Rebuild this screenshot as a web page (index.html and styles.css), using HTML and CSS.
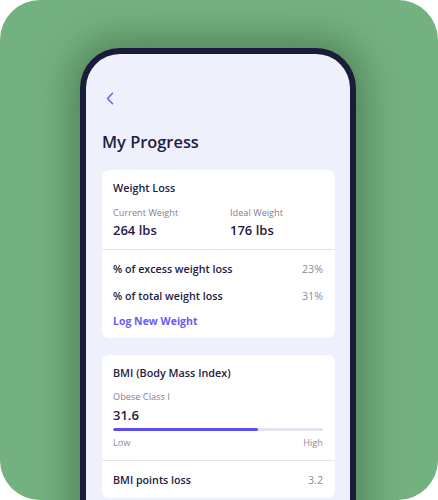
FILE: index.html
```html
<!DOCTYPE html>
<html>
<head>
<meta charset="utf-8">
<link rel="stylesheet" href="styles.css">
</head>
<body>
<div class="bg">
  <div class="phone">
    <div class="screen">
      <div class="back">
        <svg width="8" height="13" viewBox="0 0 8 13"><path d="M6.5 1.2 L1.5 6.5 L6.5 11.8" fill="none" stroke="#6a5cf2" stroke-width="1.4" stroke-linecap="round" stroke-linejoin="round"/></svg>
      </div>
      <h1 class="title">My Progress</h1>

      <div class="card">
        <div class="sec top">
          <div class="card-title">Weight Loss</div>
          <div class="stats">
            <div class="stat">
              <div class="label">Current Weight</div>
              <div class="value">264 lbs</div>
            </div>
            <div class="stat">
              <div class="label">Ideal Weight</div>
              <div class="value">176 lbs</div>
            </div>
          </div>
        </div>
        <div class="sec rows">
          <div class="row"><span class="row-name">% of excess weight loss</span><span class="row-val">23%</span></div>
          <div class="row second"><span class="row-name">% of total weight loss</span><span class="row-val">31%</span></div>
          <div class="link">Log New Weight</div>
        </div>
      </div>

      <div class="card card2">
        <div class="sec top bmi">
          <div class="card-title">BMI (Body Mass Index)</div>
          <div class="label cls">Obese Class I</div>
          <div class="value">31.6</div>
          <div class="bar"><div class="fill" style="width:69%"></div></div>
          <div class="range"><span>Low</span><span>High</span></div>
        </div>
        <div class="sec rows">
          <div class="row"><span class="row-name">BMI points loss</span><span class="row-val">3.2</span></div>
        </div>
      </div>
    </div>
  </div>
</div>
</body>
</html>
```
FILE: styles.css
```css
* { box-sizing: border-box; margin: 0; padding: 0; }
html, body { width: 438px; height: 500px; overflow: hidden; background: #ffffff; }
body { font-family: "Open Sans", "Noto Sans", sans-serif; color: #1f2042; }

.bg {
  width: 438px;
  height: 500px;
  background: #74b180;
  border-radius: 40px;
  overflow: hidden;
  padding-top: 48px;
}

.phone {
  margin-left: 80px;
  width: 276px;
  height: 520px;
  background: #1b1b3b;
  border-radius: 40px 40px 0 0;
  padding: 6px 6px 0 6px;
  box-shadow: 0 0 36px 10px rgba(40, 80, 45, 0.45);
}

.screen {
  background: #eef1fb;
  height: 100%;
  border-radius: 34px 34px 0 0;
  padding: 36px 15px 0 16px;
}

.back { height: 16px; display: flex; align-items: center; padding-left: 4px; }

.title {
  margin-top: 24px;
  font-size: 16.4px;
  line-height: 24px;
  font-weight: 600;
  color: #1f2042;
}

.card {
  margin-top: 16px;
  background: #ffffff;
  border-radius: 7px;
}
.card2 { margin-top: 17px; }

.sec { padding: 0 12px 0 11px; }
.top { padding-top: 10px; padding-bottom: 10px; border-bottom: 1px solid #e3e4ea; }

.card-title { font-size: 10.8px; line-height: 16px; font-weight: 600; color: #1f2042; }

.stats { display: flex; margin-top: 11px; }
.stat { flex: 0 0 117px; }

.label { font-size: 9.2px; line-height: 12px; color: #7f8196; }
.value { margin-top: 2px; font-size: 13px; line-height: 18px; font-weight: 600; color: #1f2042; }

.rows { padding-top: 11px; padding-bottom: 10px; }
.row { display: flex; justify-content: space-between; font-size: 10.7px; line-height: 16px; }
.row.second { margin-top: 11px; }
.row-name { font-weight: 600; color: #1f2042; }
.row-val { color: #8a8ca0; font-weight: 400; }

.link { margin-top: 10px; font-size: 10.5px; line-height: 14px; font-weight: 700; color: #6a5cf2; }

.bmi .cls { margin-top: 10px; }
.bmi .value { margin-top: 3px; }
.bar { margin-top: 4px; height: 3px; background: #e3e4ec; border-radius: 2px; overflow: hidden; }
.fill { height: 100%; background: #5b4ef0; border-radius: 2px; }
.range { margin-top: 6px; display: flex; justify-content: space-between; font-size: 9.2px; line-height: 12px; color: #8a8ca0; }
.bmi { padding-bottom: 11px; }
```
